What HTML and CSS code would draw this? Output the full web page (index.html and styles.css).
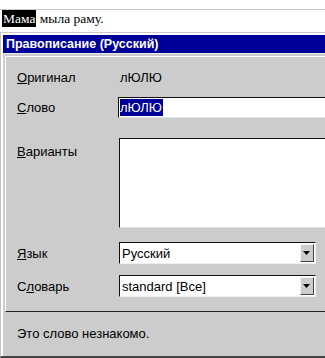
FILE: index.html
```html
<!DOCTYPE html>
<html lang="ru">
<head>
<meta charset="utf-8">
<title>Правописание</title>
<link rel="stylesheet" href="styles.css">
</head>
<body>
<div class="doc"><div class="doc-line"><span class="sel">Мама</span> мыла раму.</div></div>
<div class="frame">
  <div class="frame-in">
    <div class="titlebar">Правописание (Русский)</div>
    <div class="panel">
      <div class="row r1">
        <div class="label"><u>О</u>ригинал</div>
        <div class="value">лЮЛЮ</div>
      </div>
      <div class="row r2">
        <div class="label"><u>С</u>лово</div>
        <div class="input"><span class="hl">лЮЛЮ</span></div>
      </div>
      <div class="row r3">
        <div class="label top"><u>В</u>арианты</div>
        <div class="listbox"></div>
      </div>
      <div class="row r4">
        <div class="label"><u>Я</u>зык</div>
        <div class="combo"><span class="ctext">Русский</span><span class="cbtn"><svg width="8" height="5" viewBox="0 0 8 5"><path d="M0 0H7L3.5 4Z" fill="#000"/></svg></span></div>
      </div>
      <div class="row r5">
        <div class="label">С<u>л</u>оварь</div>
        <div class="combo"><span class="ctext">standard [Все]</span><span class="cbtn"><svg width="8" height="5" viewBox="0 0 8 5"><path d="M0 0H7L3.5 4Z" fill="#000"/></svg></span></div>
      </div>
    </div>
    <div class="status">Это слово незнакомо.</div>
  </div>
</div>
</body>
</html>
```
FILE: styles.css
```css
html, body {
  margin: 0;
  padding: 0;
  background: #ffffff;
  width: 325px;
  height: 358px;
  overflow: hidden;
}
.doc {
  padding-top: 9px;
}
.doc-line {
  border-top: 1px solid #c8c8c8;
  border-bottom: 1px solid #c8c8c8;
  height: 24px;
  padding-left: 2px;
  font-family: "Liberation Serif", serif;
  font-size: 13.5px;
  line-height: 17px;
  color: #000;
  box-sizing: border-box;
}
.sel {
  background: #000;
  color: #fff;
  display: inline-block;
  height: 17px;
  padding: 0 1px;
}
.frame {
  border-left: 1px solid #c4c4c4;
  background: #ffffff;
  padding: 2px 0 0 0;
  height: 325px;
  box-sizing: border-box;
  border-bottom: 2px solid #444;
}
.frame-in {
  margin-left: 2px;
  height: 100%;
  background: #cccccc;
  display: flex;
  flex-direction: column;
}
.titlebar {
  background: #000099;
  color: #fff;
  font-family: "Liberation Sans", sans-serif;
  font-weight: bold;
  font-size: 12.5px;
  height: 18px;
  line-height: 18px;
  padding-left: 3px;
  border-bottom: 1px solid #e6e6e6;
}
.panel {
  margin-left: 2px;
  margin-top: 2px;
  border-top: 1px solid #ffffff;
  border-left: 1px solid #ffffff;
  border-bottom: 1px solid #222;
  padding: 10px 0 0 11px;
  height: 256px;
  box-sizing: border-box;
  font-family: "Liberation Sans", sans-serif;
  font-size: 13px;
  color: #000;
}
.row {
  display: flex;
  align-items: center;
}
.label {
  width: 102px;
  flex: none;
}
.label.top {
  align-self: flex-start;
  padding-top: 6px;
}
.r1 { height: 21px; }
.r2 { margin-top: 9px; }
.r3 { margin-top: 20px; }
.r4 { margin-top: 14px; }
.r5 { margin-top: 11px; }
.value {
  padding-left: 1px;
}
.input {
  width: 220px;
  height: 21px;
  box-sizing: border-box;
  background: #fff;
  border-top: 1px solid #111;
  border-left: 1px solid #111;
  border-bottom: 1px solid #e4e4e4;
  padding: 1px 0 0 1px;
  margin-left: -1px;
}
.hl {
  background: #000099;
  color: #fff;
  display: inline-block;
  height: 17px;
  line-height: 17px;
  padding-right: 1px;
}
.listbox {
  width: 220px;
  height: 90px;
  box-sizing: border-box;
  background: #fff;
  border-top: 1px solid #111;
  border-left: 1px solid #111;
  border-bottom: 1px solid #e4e4e4;
}
.combo {
  width: 197px;
  height: 22px;
  box-sizing: border-box;
  background: #fff;
  border-top: 1px solid #111;
  border-left: 1px solid #111;
  border-bottom: 1px solid #f0f0f0;
  border-right: 1px solid #f0f0f0;
  display: flex;
  align-items: center;
  justify-content: space-between;
  padding: 0 1px 0 2px;
}
.cbtn {
  width: 14px;
  height: 18px;
  box-sizing: border-box;
  background: #cccccc;
  border-top: 1px solid #f4f4f4;
  border-left: 1px solid #f4f4f4;
  border-right: 1px solid #444;
  border-bottom: 1px solid #444;
  display: flex;
  align-items: center;
  justify-content: center;
}
.status {
  flex: 1;
  padding-left: 14px;
  padding-top: 14px;
  font-family: "Liberation Sans", sans-serif;
  font-size: 13px;
  color: #000;
}
```
